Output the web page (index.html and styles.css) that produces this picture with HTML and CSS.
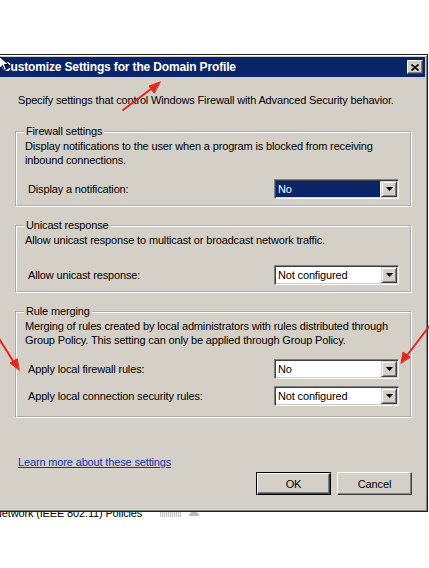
FILE: index.html
```html
<!DOCTYPE html>
<html>
<head>
<meta charset="utf-8">
<title>Customize Settings for the Domain Profile</title>
<link rel="stylesheet" href="styles.css">
</head>
<body>
<div class="dialog">
  <div class="titlebar">
    <span class="title">Customize Settings for the Domain Profile</span>
    <span class="close"><svg width="8" height="7" viewBox="0 0 8 7"><path d="M0.5 0.5L7.5 6.5M7.5 0.5L0.5 6.5" stroke="#000" stroke-width="1.6"/></svg></span>
  </div>
  <div class="content">
    <p class="intro">Specify settings that control Windows Firewall with Advanced Security behavior.</p>

    <fieldset class="group">
      <legend>Firewall settings</legend>
      <p class="desc">Display notifications to the user when a program is blocked from receiving<br>inbound connections.</p>
      <div class="row">
        <span class="label">Display a notification:</span>
        <div class="combo"><span class="value selected">No</span><span class="drop"><svg width="7" height="4" viewBox="0 0 7 4"><path d="M0 0H7L3.5 4Z" fill="#000"/></svg></span></div>
      </div>
    </fieldset>

    <fieldset class="group">
      <legend>Unicast response</legend>
      <p class="desc single">Allow unicast response to multicast or broadcast network traffic.</p>
      <div class="row">
        <span class="label">Allow unicast response:</span>
        <div class="combo"><span class="value">Not configured</span><span class="drop"><svg width="7" height="4" viewBox="0 0 7 4"><path d="M0 0H7L3.5 4Z" fill="#000"/></svg></span></div>
      </div>
    </fieldset>

    <fieldset class="group group-last">
      <legend>Rule merging</legend>
      <p class="desc">Merging of rules created by local administrators with rules distributed through<br>Group Policy. This setting can only be applied through Group Policy.</p>
      <div class="row">
        <span class="label">Apply local firewall rules:</span>
        <div class="combo"><span class="value">No</span><span class="drop"><svg width="7" height="4" viewBox="0 0 7 4"><path d="M0 0H7L3.5 4Z" fill="#000"/></svg></span></div>
      </div>
      <div class="row">
        <span class="label">Apply local connection security rules:</span>
        <div class="combo"><span class="value">Not configured</span><span class="drop"><svg width="7" height="4" viewBox="0 0 7 4"><path d="M0 0H7L3.5 4Z" fill="#000"/></svg></span></div>
      </div>
    </fieldset>

    <div class="footer">
      <a class="link" href="#">Learn more about these settings</a>
      <div class="buttons">
        <button class="btn default">OK</button>
        <button class="btn">Cancel</button>
      </div>
    </div>
  </div>
</div>
<div class="behind">
  <span class="behind-text">Network (IEEE 802.11) Policies</span>
  <span class="hatch"></span>
  <span class="mini-icon"></span>
</div>

<svg class="cursor" width="10" height="16" viewBox="0 0 10 16"><path d="M0.5 0.5V12.5L3.5 9.5L5.5 14.5L7.5 13.5L5.5 8.5H9.5Z" fill="#fff" stroke="#000" stroke-width="1"/></svg>

<svg class="arrows" width="429" height="568" viewBox="0 0 429 568">
  <g stroke="#e8241e" stroke-width="2" fill="#e8241e" stroke-linecap="round">
    <line x1="123" y1="110" x2="155" y2="86"/>
    <path d="M160 82L149 86L154 93Z" stroke-width="1"/>
    <line x1="-2" y1="337" x2="15" y2="364"/>
    <path d="M19 370L10 363L17 359Z" stroke-width="1"/>
    <line x1="431" y1="324" x2="405" y2="358"/>
    <path d="M401 363L403 352L410 357Z" stroke-width="1"/>
  </g>
</svg>
</body>
</html>
```

FILE: styles.css
```css
* { box-sizing: border-box; }

html, body {
  margin: 0;
  background: #fff;
  overflow: hidden;
}

body {
  font-family: "Liberation Sans", Arial, sans-serif;
  font-size: 11px;
  letter-spacing: -0.15px;
  color: #000;
  position: relative;
  width: 429px;
  height: 568px;
}

.dialog {
  margin: 54px 0 0 -3px;
  width: 431px;
  background: #d4d0c8;
  border: 1px solid #202020;
  box-shadow: inset 1px 1px 0 #fff, inset -1px -1px 0 #808080;
  padding: 2px;
  position: relative;
  z-index: 1;
}

.titlebar {
  height: 20px;
  background: #0a246a;
  display: flex;
  align-items: center;
  justify-content: space-between;
  padding: 0 2px 0 2px;
}

.title {
  color: #fff;
  font-weight: bold;
  font-size: 12px;
  line-height: 14px;
  letter-spacing: -0.15px;
}

.close {
  width: 16px;
  height: 14px;
  background: #d4d0c8;
  border: 1px solid;
  border-color: #fff #404040 #404040 #fff;
  box-shadow: inset -1px -1px 0 #808080;
  display: flex;
  align-items: center;
  justify-content: center;
}

.close svg { display: block; }

.content {
  padding: 17px 13px 14px 15px;
}

.intro {
  margin: 0 0 18px 3px;
  line-height: 13px;
}

.group {
  margin: 0;
  border: 2px groove #fff;
  padding: 1px 11px 6px 8px;
  min-width: 0;
}

.group + .group { margin-top: 12px; }

.group-last { padding-bottom: 10px; }

.group legend {
  padding: 0 2px;
  line-height: 13px;
  margin-left: -1px;
}

.desc {
  margin: 0 0 12px 0;
  line-height: 14px;
  min-height: 28px;
  white-space: nowrap;
}

.desc.single {
  min-height: 14px;
  margin-bottom: 18px;
}

.row {
  display: flex;
  align-items: center;
  justify-content: space-between;
}

.row + .row { margin-top: 7px; }

.label { margin-left: 3px; }

.combo {
  width: 125px;
  height: 20px;
  background: #fff;
  border: 1px solid;
  border-color: #808080 #fff #fff #808080;
  box-shadow: inset 1px 1px 0 #404040, inset -1px -1px 0 #d4d0c8;
  padding: 1px;
  display: flex;
}

.value {
  flex: 1;
  padding-left: 2px;
  line-height: 16px;
  margin: 0 1px 0 0;
}

.value.selected {
  background: #0a246a;
  color: #fff;
}

.drop {
  width: 16px;
  height: 16px;
  background: #d4d0c8;
  border: 1px solid;
  border-color: #d4d0c8 #404040 #404040 #d4d0c8;
  box-shadow: inset 1px 1px 0 #fff, inset -1px -1px 0 #808080;
  display: flex;
  align-items: center;
  justify-content: center;
}

.drop svg { display: block; }

.footer {
  margin-top: 38px;
  display: flex;
  flex-direction: column;
}

.link {
  margin-left: 3px;
  color: #1533b0;
  text-decoration: underline;
  line-height: 13px;
  align-self: flex-start;
}

.buttons {
  display: flex;
  justify-content: flex-end;
  gap: 6px;
  margin-top: 3px;
}

.btn {
  width: 75px;
  height: 23px;
  padding: 0;
  font: inherit;
  letter-spacing: inherit;
  color: #000;
  background: #d4d0c8;
  border: 1px solid;
  border-color: #fff #404040 #404040 #fff;
  box-shadow: inset -1px -1px 0 #808080;
}

.btn.default {
  border: 1px solid #000;
  box-shadow: inset 1px 1px 0 #fff, inset -1px -1px 0 #404040, inset -2px -2px 0 #808080;
}

.behind {
  height: 7px;
  overflow: hidden;
  display: flex;
  align-items: flex-start;
  white-space: nowrap;
}

.behind-text {
  margin: -5px 0 0 -6px;
  line-height: 13px;
  font-size: 11px;
}

.hatch {
  width: 21px;
  height: 5px;
  margin-left: 18px;
  background: repeating-linear-gradient(90deg, #c8c8c8 0 1px, #eee 1px 2px);
}

.mini-icon {
  width: 10px;
  height: 4px;
  margin-left: 8px;
  background: #bbb;
  border-radius: 4px 4px 0 0;
}

.cursor {
  position: absolute;
  left: -1px;
  top: 56px;
  z-index: 2;
}

.arrows {
  position: absolute;
  left: 0;
  top: 0;
  z-index: 3;
  pointer-events: none;
}
```
